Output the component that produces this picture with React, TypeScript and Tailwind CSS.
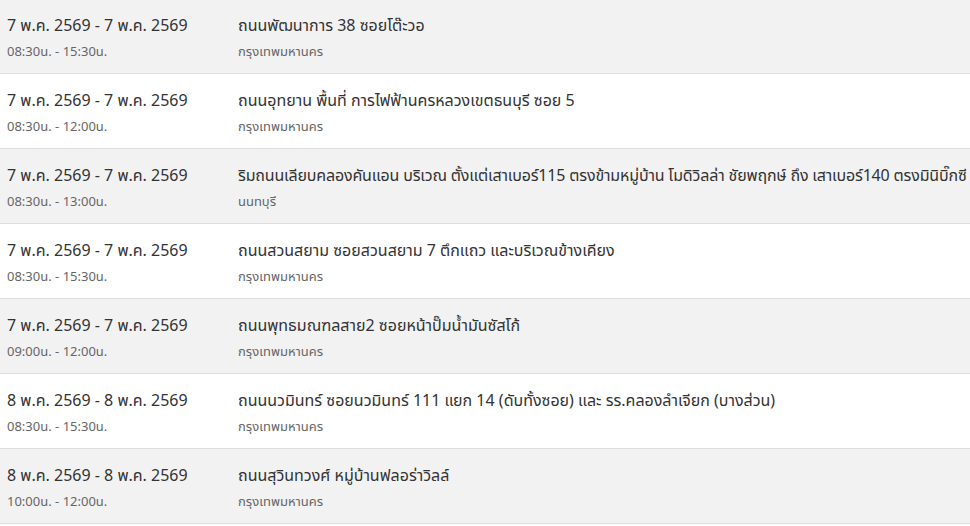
import React from 'react';

type Item = {
  date: string;
  time: string;
  place: string;
  province: string;
  tight?: boolean;
};

const items: Item[] = [
  { date: '7 พ.ค. 2569 - 7 พ.ค. 2569', time: '08:30น. - 15:30น.', place: 'ถนนพัฒนาการ 38 ซอยโต๊ะวอ', province: 'กรุงเทพมหานคร' },
  { date: '7 พ.ค. 2569 - 7 พ.ค. 2569', time: '08:30น. - 12:00น.', place: 'ถนนอุทยาน พื้นที่ การไฟฟ้านครหลวงเขตธนบุรี ซอย 5', province: 'กรุงเทพมหานคร' },
  { date: '7 พ.ค. 2569 - 7 พ.ค. 2569', time: '08:30น. - 13:00น.', place: 'ริมถนนเลียบคลองคันแอน บริเวณ ตั้งแต่เสาเบอร์115 ตรงข้ามหมู่บ้าน โมดิวิลล่า ชัยพฤกษ์ ถึง เสาเบอร์140 ตรงมินิบิ๊กซี', province: 'นนทบุรี', tight: true },
  { date: '7 พ.ค. 2569 - 7 พ.ค. 2569', time: '08:30น. - 15:30น.', place: 'ถนนสวนสยาม ซอยสวนสยาม 7 ตึกแถว และบริเวณข้างเคียง', province: 'กรุงเทพมหานคร' },
  { date: '7 พ.ค. 2569 - 7 พ.ค. 2569', time: '09:00น. - 12:00น.', place: 'ถนนพุทธมณฑลสาย2 ซอยหน้าปั๊มน้ำมันซัสโก้', province: 'กรุงเทพมหานคร' },
  { date: '8 พ.ค. 2569 - 8 พ.ค. 2569', time: '08:30น. - 15:30น.', place: 'ถนนนวมินทร์ ซอยนวมินทร์ 111 แยก 14 (ดับทั้งซอย) และ รร.คลองลำเจียก (บางส่วน)', province: 'กรุงเทพมหานคร' },
  { date: '8 พ.ค. 2569 - 8 พ.ค. 2569', time: '10:00น. - 12:00น.', place: 'ถนนสุวินทวงศ์ หมู่บ้านฟลอร่าวิลล์', province: 'กรุงเทพมหานคร' },
];

export default function App() {
  return (
    <div className="w-[970px] h-[526px] overflow-hidden bg-white font-['Noto_Sans_Thai','Noto_Sans',sans-serif] text-[#333]">
      <div className="-mt-[1px]">
        {items.map((it, idx) => (
          <div
            key={idx}
            className={`flex h-[75px] border-b border-[#dedede] pl-[7px] pt-[14px] ${idx % 2 === 0 ? 'bg-[#f2f2f2]' : 'bg-white'}`}
          >
            <div className="w-[231px] shrink-0">
              <p className="text-[16px] leading-[26px] whitespace-nowrap">{it.date}</p>
              <p className="text-[13px] leading-[26px] text-[#666] whitespace-nowrap">{it.time}</p>
            </div>
            <div className="min-w-0">
              <p className={`text-[16px] leading-[26px] whitespace-nowrap ${it.tight ? 'tracking-[-0.16px]' : ''}`}>{it.place}</p>
              <p className="text-[13px] leading-[26px] text-[#666] whitespace-nowrap">{it.province}</p>
            </div>
          </div>
        ))}
      </div>
    </div>
  );
}
